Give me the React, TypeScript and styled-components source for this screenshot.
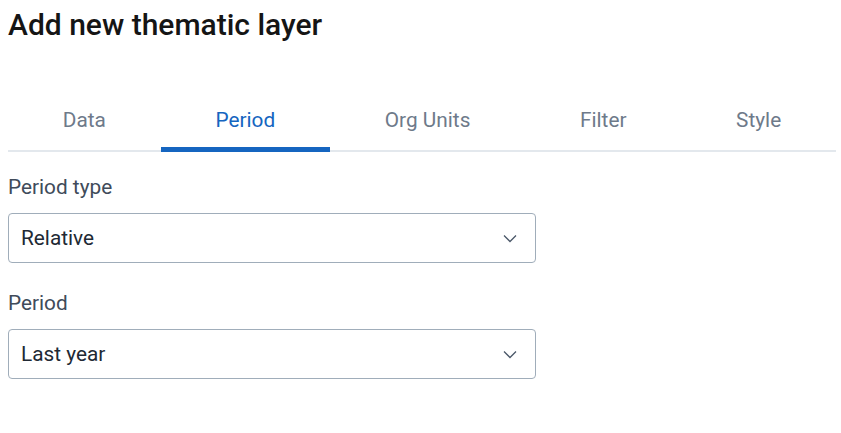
import React from "react";
import styled, { createGlobalStyle } from "styled-components";

const Global = createGlobalStyle`
  html, body { margin: 0; padding: 0; background: #ffffff; }
  body { font-family: Roboto, "Noto Sans", "Liberation Sans", sans-serif; }
`;

const Page = styled.div`
  padding: 8px 5px 0 8px;
  width: 828px;
`;

const Title = styled.h1`
  margin: 0;
  font-size: 30px;
  line-height: 34px;
  font-weight: 500;
  color: #151515;
`;

const TabBar = styled.div`
  display: flex;
  margin-top: 53px;
  border-bottom: 2px solid #e3e8ed;
`;

const Tab = styled.div<{ $active?: boolean }>`
  flex: 1 1 auto;
  text-align: center;
  font-size: 20.8px;
  line-height: 24px;
  padding: 13px 0 15px;
  margin-bottom: -2px;
  color: ${(p) => (p.$active ? "#1565c0" : "#6e7a8a")};
  border-bottom: 5px solid ${(p) => (p.$active ? "#1565c0" : "transparent")};
  cursor: pointer;
`;

const Field = styled.div<{ $gap: number }>`
  display: flex;
  flex-direction: column;
  width: 528px;
  margin-top: ${(p) => p.$gap}px;
`;

const Label = styled.label`
  font-size: 20.8px;
  line-height: 26px;
  color: #404b5a;
  margin-bottom: 13px;
`;

const Select = styled.div`
  display: flex;
  align-items: center;
  justify-content: space-between;
  height: 48px;
  border: 1px solid #a0adba;
  border-radius: 4px;
  padding: 0 18px 0 12px;
  font-size: 20.8px;
  color: #212934;
`;

const Chevron = () => (
  <svg width="14" height="9" viewBox="0 0 14 9" fill="none">
    <path d="M1 1.5 L7 7.5 L13 1.5" stroke="#4a5768" strokeWidth="1.3" />
  </svg>
);

const tabs = ["Data", "Period", "Org Units", "Filter", "Style"];

export default function App() {
  return (
    <Page>
      <Global />
      <Title>Add new thematic layer</Title>
      <TabBar>
        {tabs.map((t) => (
          <Tab key={t} $active={t === "Period"}>
            {t}
          </Tab>
        ))}
      </TabBar>
      <Field $gap={22}>
        <Label>Period type</Label>
        <Select>
          <span>Relative</span>
          <Chevron />
        </Select>
      </Field>
      <Field $gap={27}>
        <Label>Period</Label>
        <Select>
          <span>Last year</span>
          <Chevron />
        </Select>
      </Field>
    </Page>
  );
}
